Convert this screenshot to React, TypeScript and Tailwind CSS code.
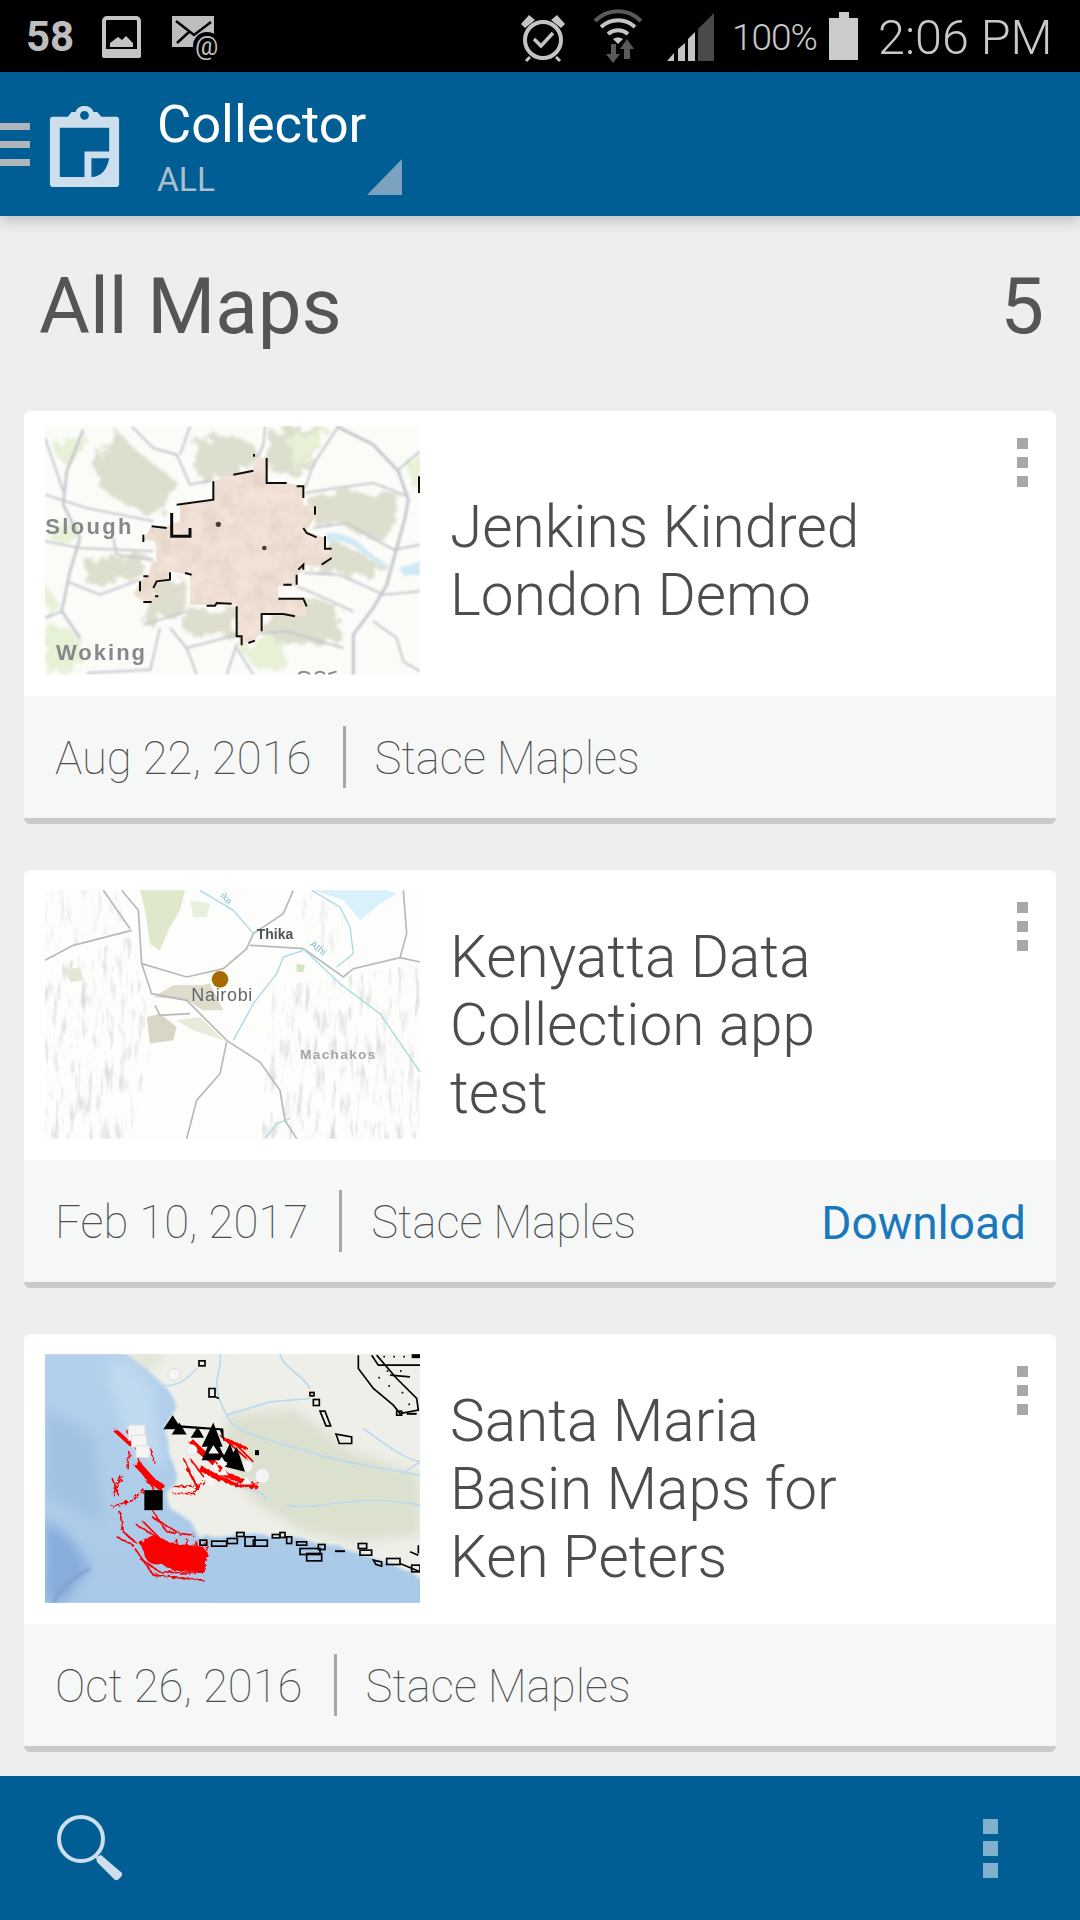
const cards = [
  { title: ["Jenkins Kindred", "London Demo"], date: "Aug 22, 2016", map: <LondonMap />, download: false, top: "h-[285px]" },
  { title: ["Kenyatta Data", "Collection app", "test"], date: "Feb 10, 2017", map: <NairobiMap />, download: true, top: "h-[290px]" },
  { title: ["Santa Maria", "Basin Maps for", "Ken Peters"], date: "Oct 26, 2016", map: <SantaMariaMap />, download: false, top: "h-[290px]" },
];

function LondonMap() {
  return (
    <svg viewBox="75 65 1125 745" className="w-full h-full block">
      <defs>
        <filter id="lb"><feGaussianBlur stdDeviation="2.500" /></filter>
        <filter id="lh" x="-10%" y="-10%" width="120%" height="120%">
          <feTurbulence type="fractalNoise" baseFrequency="0.025" numOctaves="3" seed="7" result="t" />
          <feDisplacementMap in="SourceGraphic" in2="t" scale="70" />
          <feGaussianBlur stdDeviation="4" />
        </filter>
        <filter id="ls"><feGaussianBlur stdDeviation="1.500" /></filter>
        <filter id="lm" x="0" y="0" width="100%" height="100%">
          <feTurbulence type="fractalNoise" baseFrequency="0.02" numOctaves="3" seed="4" />
          <feColorMatrix values="0 0 0 0 0.72  0 0 0 0 0.62  0 0 0 0 0.54  1.4 0 0 0 -0.5" />
          <feComposite in2="SourceAlpha" operator="in" result="n" />
          <feMerge>
            <feMergeNode in="SourceGraphic" />
            <feMergeNode in="n" />
          </feMerge>
        </filter>
      </defs>
      <rect x="75" y="65" width="1125" height="745" fill="#fbfbf8" />
      <g filter="url(#lh)" fill="#dddecd">
        <path d="M220 170 L290 75 L340 130 L470 230 L430 330 L330 310 L240 250Z" />
        <path d="M520 130 L590 90 L700 120 L690 195 L540 230Z" />
        <path d="M750 75 L920 70 L850 210 L745 200Z" />
        <path d="M860 270 L1140 260 L1130 340 L1090 420 L950 350 L890 370Z" />
        <path d="M930 410 L1090 470 L1060 520 L860 490Z" />
        <path d="M190 470 L390 450 L370 500 L290 540 L200 540Z" />
        <path d="M380 520 L490 520 L500 610 L370 660Z" />
        <path d="M510 620 L650 610 L640 690 L500 690Z" />
        <path d="M770 590 L950 590 L970 710 L760 720 L730 670Z" />
      </g>
      <g filter="url(#lh)" fill="#e6f1d6">
        <path d="M75 540 L120 600 L90 640 L75 640Z" />
        <path d="M75 660 L180 690 L190 780 L90 810 L75 810Z" />
        <path d="M800 110 L930 70 L880 150 L820 200Z" />
        <path d="M1160 160 L1200 150 L1200 240 L1170 240Z" />
        <path d="M660 720 L780 690 L800 790 L700 790Z" />
        <path d="M100 380 L180 350 L170 410 L90 410Z" />
        <path d="M110 120 L200 90 L180 170 L120 180Z" />
      </g>
      <g filter="url(#lb)" fill="none" stroke="#c4c7cc" strokeWidth="6">
        <path d="M950 65 L1060 120 L1135 200 L1165 285 L1155 340 L1100 540 L1060 610 L1000 690 L1000 810" strokeWidth="9" />
        <path d="M1200 140 L1130 200" />
        <path d="M955 65 L880 180 L855 250" />
        <path d="M855 265 L950 250 L1060 235 L1165 275" />
        <path d="M880 370 L980 355 L1120 435 L1200 420" />
        <path d="M850 505 L960 510 L1090 570 L1200 560" />
        <path d="M830 545 L890 570 L1000 620" />
        <path d="M1060 650 L1130 700 L1150 770 L1200 800" />
        <path d="M735 65 L730 120 L705 180" />
        <path d="M335 65 L400 130 L470 150 L510 240 L580 225" />
        <path d="M510 65 L480 150" />
        <path d="M190 75 L140 200 L130 300 L180 400 L150 500 L125 620 L180 700" strokeWidth="8" />
        <path d="M75 100 L130 260" />
        <path d="M75 270 L200 310 L400 350" />
        <path d="M75 410 L180 430 L400 440" />
        <path d="M280 400 L290 450 L400 465" />
        <path d="M140 530 L240 570 L360 525" />
        <path d="M75 640 L125 620" />
        <path d="M370 660 L500 620" />
        <path d="M420 670 L390 800" />
        <path d="M450 670 L500 730 L530 810" />
        <path d="M500 730 L650 690 L800 680 L970 730" />
        <path d="M650 720 L620 810 M650 730 L700 810" />
        <path d="M200 805 L390 795" />
      </g>
      <path
        filter="url(#lb)"
        fill="#cfeaf5"
        d="M920 385 C960 380 1010 400 1040 435 C1060 455 1090 475 1110 485 L1095 490 C1060 470 1030 450 1010 430 C990 415 960 410 920 410Z M1140 490 L1200 470 L1200 512 L1150 512Z"
      />
      <path
        filter="url(#lm)"
        fill="#f3e2d7"
        d="M705 160 L740 160 L740 235 L800 235 L850 245 L850 300 L885 305 L885 335 L860 380 L915 400 L915 430 L935 435 L935 460 L905 480 L850 480 L850 500 L830 510 L830 545 L775 545 L775 580 L850 585 L860 635 L725 630 L725 680 L700 710 L665 715 L650 690 L650 600 L510 600 L510 510 L450 500 L450 520 L400 550 L410 580 L370 590 L340 570 L360 530 L385 510 L395 475 L410 470 L405 410 L370 405 L395 365 L440 365 L480 350 L480 300 L575 285 L580 230 L640 210 L700 195Z"
      />
      <g filter="url(#ls)" fill="none" stroke="#111" strokeWidth="6">
        <path d="M740 160 L740 235 L800 235" />
        <path d="M830 245 L850 245 L850 280" />
        <path d="M580 230 L580 285 L470 300" />
        <path d="M640 210 L700 198" />
        <path d="M455 325 L455 395 L510 395 L510 370" strokeWidth="9" />
        <path d="M395 365 L440 370" />
        <path d="M370 390 L370 412" />
        <path d="M850 370 L860 385 L890 398" />
        <path d="M915 395 L915 432 L935 432" />
        <path d="M905 480 L935 460" />
        <path d="M830 510 L830 540 M790 540 L815 540" />
        <path d="M775 582 L850 582 L860 605" />
        <path d="M725 680 L725 628 L790 628 L825 635" />
        <path d="M650 605 L650 695 L665 695 L665 722 M685 715 L705 708" />
        <path d="M560 603 L585 603 L590 595 L635 597" />
        <path d="M450 503 L450 525 L410 530 L400 550" />
        <path d="M385 515 L370 515 M360 530 L360 560 M370 592 L395 592 M405 575 L415 575" />
        <path d="M495 505 L515 510 M885 305 L885 330 M835 495 L850 480 L850 495" />
        <path d="M702 148 L702 156 M1197 215 L1197 265" />
      </g>
      <circle cx="595" cy="359" r="8" fill="#4a3b36" filter="url(#ls)" />
      <circle cx="733" cy="430" r="7" fill="#4a3b36" filter="url(#ls)" />
      <path d="M835 808 Q850 795 870 808 M885 808 Q900 795 915 808 M925 808 L950 800" fill="none" stroke="#8a8a8a" strokeWidth="6" filter="url(#ls)" />
      <g filter="url(#ls)" fontFamily="'Liberation Sans', sans-serif" fontWeight="bold" fill="#86898a">
        <text x="76" y="388" fontSize="66" letterSpacing="7">Slough</text>
        <text x="108" y="765" fontSize="66" letterSpacing="6">Woking</text>
      </g>
    </svg>
  );
}

function NairobiMap() {
  return (
    <svg viewBox="75 60 1125 745" className="w-full h-full block">
      <defs>
        <filter id="nb"><feGaussianBlur stdDeviation="2" /></filter>
        <filter id="ns"><feGaussianBlur stdDeviation="1" /></filter>
        <filter id="nh" x="0" y="0" width="100%" height="100%">
          <feTurbulence type="fractalNoise" baseFrequency="0.06 0.012" numOctaves="4" seed="11" />
          <feColorMatrix values="0 0 0 0 0.66  0 0 0 0 0.66  0 0 0 0 0.63  2.2 0 0 0 -1.12" />
          <feComposite in2="SourceAlpha" operator="in" />
          <feGaussianBlur stdDeviation="1.500" />
        </filter>
      </defs>
      <rect x="75" y="60" width="1125" height="745" fill="#fdfdfc" />
      <path d="M75 300 L330 200 L400 500 L330 805 L75 805Z" fill="#000" filter="url(#nh)" />
      <path d="M760 350 L1200 280 L1200 805 L720 805Z" fill="#000" filter="url(#nh)" />
      <path d="M75 60 L340 60 L330 170 L75 250Z" fill="#000" filter="url(#nh)" opacity="0.6" />
      <path d="M830 60 L960 100 L990 280 L860 220Z" fill="#000" filter="url(#nh)" opacity="0.6" />
      <g filter="url(#nb)">
        <path d="M970 90 L1020 150 L1080 100 L1130 70 L1100 60 L880 60Z" fill="#d8f1fb" />
        <path d="M360 60 L495 60 L480 120 L450 170 L420 240 L390 220 L375 120Z" fill="#dde9ca" />
        <path d="M510 90 L570 100 L560 140 L520 140Z" fill="#e7f0db" />
        <path d="M830 280 L855 285 L850 305 L830 305Z" fill="#d3e3bc" />
        <path d="M140 300 L180 290 L190 330 L150 335Z" fill="#e2e8d5" />
        <path d="M460 345 L540 345 L570 340 L610 420 L550 420 L500 390 L400 380Z" fill="#dfdccc" />
        <path d="M380 440 L420 430 L470 470 L460 510 L390 520Z" fill="#dad6c7" />
        <path d="M470 450 L540 440 L610 510 L520 480Z" fill="#e6ebdc" />
        <g fill="none" stroke="#b9b9b9" strokeWidth="5">
          <path d="M305 60 L355 120 L365 280 L395 370 L500 390 L620 510 L720 575 L780 660 L795 750 L830 805" />
          <path d="M250 60 L330 175" />
          <path d="M75 270 L160 225 L335 180" />
          <path d="M365 280 L500 320 L610 295 L680 235 L700 190 L790 130 L820 60" />
          <path d="M690 225 L850 235 L970 320 L1000 295 L1140 262 L1200 275" />
          <path d="M1140 262 L1160 190 L1150 60" />
          <path d="M620 515 L600 610 L530 690 L500 805" />
          <path d="M405 405 L420 435 L510 430" />
        </g>
        <g fill="none" stroke="#a9dbe6" strokeWidth="4">
          <path d="M540 60 L640 120 L700 190" />
          <path d="M850 235 L960 340 L1080 430 L1200 605" />
          <path d="M850 240 L790 260 L770 310 L700 400 L640 510" />
          <path d="M735 805 L770 760 L810 745" />
          <path d="M875 60 L960 110 L990 170 L1000 250 L950 290" />
        </g>
      </g>
      <circle cx="600" cy="327" r="25" fill="#a86a00" />
      <g filter="url(#ns)" fontFamily="'Liberation Sans', sans-serif">
        <text x="514" y="392" fontSize="54" fill="#62676a" letterSpacing="2">Nairobi</text>
        <text x="710" y="205" fontSize="42" fontWeight="bold" fill="#4f5355">Thika</text>
        <text x="840" y="565" fontSize="41" fontWeight="bold" fill="#a5a5a5" letterSpacing="4">Machakos</text>
        <text x="868" y="225" fontSize="30" fill="#7fbcd0" transform="rotate(38 868 225)">Athi</text>
        <text x="600" y="78" fontSize="28" fill="#7fbcd0" transform="rotate(45 600 78)">ika</text>
      </g>
    </svg>
  );
}

function SantaMariaMap() {
  return (
    <svg viewBox="75 57 1125 746" className="w-full h-full block">
      <defs>
        <linearGradient id="sea" x1="0" y1="0" x2="0" y2="1">
          <stop offset="0" stopColor="#b3d1ec" />
          <stop offset="1" stopColor="#a9c9e8" />
        </linearGradient>
        <filter id="sb"><feGaussianBlur stdDeviation="2" /></filter>
        <filter id="sh"><feGaussianBlur stdDeviation="18" /></filter>
        <filter id="sl"><feGaussianBlur stdDeviation="5" /></filter>
        <filter id="sc" x="-10%" y="-10%" width="120%" height="120%">
          <feTurbulence type="fractalNoise" baseFrequency="0.015" numOctaves="3" seed="3" result="t" />
          <feDisplacementMap in="SourceGraphic" in2="t" scale="30" />
          <feGaussianBlur stdDeviation="5" />
        </filter>
        <filter id="sr" x="-10%" y="-10%" width="120%" height="120%">
          <feTurbulence type="fractalNoise" baseFrequency="0.09" numOctaves="2" seed="9" result="t" />
          <feDisplacementMap in="SourceGraphic" in2="t" scale="16" />
          <feGaussianBlur stdDeviation="1.200" />
        </filter>
      </defs>
      <rect x="75" y="57" width="1125" height="746" fill="url(#sea)" />
      <g filter="url(#sh)">
        <path d="M75 550 L160 620 L210 700 L130 803 L75 803Z" fill="#86addb" />
        <path d="M75 220 L220 300 L250 560 L75 480Z" fill="#a2c2e3" />
        <path d="M280 57 L400 150 L430 400 L320 330 L260 120Z" fill="#bfd9ef" />
        <path d="M560 670 L1100 680 L1200 803 L540 803Z" fill="#a8c9e8" />
      </g>
      <path d="M210 700 C170 720 120 760 100 803" fill="none" stroke="#7d9fcb" strokeWidth="8" filter="url(#sl)" />
      <path
        filter="url(#sc)"
        fill="#eeefe8"
        d="M310 50 L370 90 L450 170 L470 210 L430 270 L440 310 L470 420 L445 470 L450 520 L510 555 L540 610 L700 595 L850 610 L1000 650 L1120 690 L1215 735 L1215 40Z"
      />
      <path filter="url(#sh)" fill="#dbe0cf" d="M620 240 L820 220 L980 340 L1200 420 L1200 600 L1000 620 L850 590 L700 500 L620 380Z" />
      <path filter="url(#sh)" fill="#dbe0cf" d="M310 57 L430 57 L400 100Z" />
      <g filter="url(#sb)" fill="none" stroke="#bcd9ee" strokeWidth="5">
        <path d="M420 150 C480 160 510 120 530 100 M600 57 C610 120 560 130 620 240 C640 300 780 320 900 360 C1000 390 1100 400 1200 420" />
        <path d="M780 57 C790 100 840 110 870 160 M620 240 L750 200 L870 190" />
        <path d="M800 510 C900 530 1000 470 1200 510 M1030 280 C1100 330 1150 370 1200 380" />
        <path d="M640 450 C700 470 730 460 740 500 M1140 420 L1200 380" />
      </g>
      <g filter="url(#sr)" fill="none" stroke="#fa0000" strokeWidth="5">
        <path d="M320 285 L350 340 L360 400 L400 460 L400 530 L440 590 L520 600" />
        <path d="M360 380 L380 420 L430 450" />
        <path d="M330 350 L320 400 M390 340 L405 385" />
        <path d="M275 425 L295 480 M300 420 L280 480 M310 425 L290 450" />
        <path d="M275 515 L340 495 L370 460" />
        <path d="M300 530 L310 590 L350 625" />
        <path d="M290 605 L340 630 M320 600 L340 615" />
        <path d="M350 570 L420 610 M370 560 L430 620 M395 545 L470 590" />
        <path d="M345 640 L400 720 L550 735" />
        <path d="M360 670 L420 710 L530 715" />
        <path d="M460 475 L520 475 L560 430" />
        <path d="M490 370 L530 450 M510 370 L555 430 M500 400 L535 460" />
        <path d="M460 455 L540 450" />
        <path d="M560 660 L560 620 M550 625 L560 620" />
        <path d="M520 340 L600 400 M560 320 L660 400 M600 300 L680 370 M640 320 L700 380" />
        <path d="M600 420 L660 455 L720 440" />
        <path d="M470 610 L470 680 M500 610 L500 690 M530 620 L530 700" />
      </g>
      <g filter="url(#sr)" fill="none" stroke="#fa0000">
        <path d="M285 285 L335 330" strokeWidth="12" />
        <path d="M350 385 L400 440" strokeWidth="20" />
        <path d="M380 430 L430 460" strokeWidth="20" />
        <path d="M510 315 L620 420 L700 450" strokeWidth="16" />
        <path d="M610 310 L680 340" strokeWidth="10" />
        <path d="M540 400 L600 430" strokeWidth="16" />
        <path d="M600 430 L650 450 L715 455" strokeWidth="10" />
      </g>
      <path filter="url(#sr)" fill="#fa0000" d="M355 620 L400 600 L460 625 L550 635 L565 660 L550 715 L460 705 L380 665Z" />
      <circle cx="410" cy="650" r="38" fill="#fa0000" filter="url(#sb)" />
      <rect x="373" y="465" width="55" height="60" fill="#000" filter="url(#sb)" />
      <g fill="#f5f5f5" stroke="#ddd" strokeWidth="3" filter="url(#sb)">
        <rect x="325" y="270" width="50" height="45" />
        <rect x="335" y="300" width="45" height="35" />
        <rect x="348" y="332" width="40" height="35" />
        <circle cx="462" cy="118" r="18" />
        <circle cx="515" cy="345" r="16" />
        <circle cx="680" cy="393" r="18" />
        <circle cx="727" cy="422" r="22" />
      </g>
      <g fill="#000" filter="url(#sb)">
        <path d="M430 282 L458 240 L485 282Z" />
        <path d="M455 298 L478 262 L500 298Z" />
        <path d="M512 308 L533 275 L552 308Z" />
        <path d="M545 335 L580 262 L608 335Z" />
        <path d="M545 375 L580 295 L618 375Z" />
        <path d="M605 375 L630 325 L655 395Z" />
        <path d="M615 395 L650 335 L675 410Z" />
        <path d="M480 270 L610 280 L612 320 L600 285 L480 278Z" />
      </g>
      <g fill="#f5f5f5" filter="url(#sb)">
        <path d="M565 355 L580 330 L597 355Z" />
        <path d="M570 405 L585 380 L600 405Z" />
        <path d="M590 390 L605 365 L622 390Z" />
        <path d="M595 420 L610 395 L625 420Z" />
        <path d="M545 435 L560 415 L575 440Z" />
        <path d="M555 450 L570 420 L588 450Z" />
        <path d="M662 448 L680 425 L697 448Z" />
      </g>
      <g fill="none" stroke="#000" strokeWidth="5" filter="url(#sb)">
        <rect x="537" y="77" width="18" height="15" />
        <path d="M567 160 L585 160 L585 185 L567 185Z M585 185 L597 190" />
        <rect x="870" y="172" width="12" height="10" />
        <rect x="880" y="193" width="18" height="18" />
        <path d="M900 228 L915 228 L932 272 L918 272Z" />
        <path d="M948 297 L995 305 L995 325 L958 325Z" />
        <path d="M1015 60 L1015 100 L1060 160 L1120 210 L1140 235 L1195 225 L1190 190 L1130 130 L1070 60" />
        <path d="M1055 60 L1075 90 L1200 90 M1110 120 L1170 125" />
        <rect x="1130" y="228" width="15" height="12" />
        <rect x="540" y="615" width="20" height="15" />
        <rect x="575" y="618" width="45" height="15" />
        <rect x="622" y="610" width="30" height="15" />
        <rect x="650" y="592" width="22" height="12" />
        <rect x="675" y="605" width="30" height="28" />
        <rect x="700" y="615" width="42" height="18" />
        <rect x="757" y="598" width="22" height="10" />
        <rect x="780" y="592" width="15" height="15" />
        <rect x="800" y="605" width="15" height="20" />
        <rect x="830" y="620" width="30" height="10" />
        <rect x="840" y="640" width="60" height="18" />
        <rect x="860" y="655" width="45" height="22" />
        <rect x="895" y="628" width="20" height="15" />
        <rect x="1015" y="625" width="25" height="15" />
        <rect x="1020" y="645" width="35" height="15" />
        <path d="M1060 675 L1085 680 L1085 693 L1068 688Z" />
        <rect x="1100" y="670" width="40" height="18" />
        <path d="M1140 685 L1200 710" />
        <rect x="1175" y="690" width="25" height="20" />
        <path d="M1195 630 L1195 655 M1170 650 L1195 660" />
      </g>
      <g fill="#000" filter="url(#sb)">
        <rect x="945" y="645" width="30" height="6" />
        <rect x="1175" y="57" width="25" height="12" />
        <rect x="705" y="345" width="12" height="15" />
        <rect x="1160" y="233" width="30" height="6" />
        <rect x="1090" y="62" width="5" height="5" />
        <rect x="1120" y="62" width="5" height="5" />
        <rect x="1150" y="62" width="5" height="5" />
        <rect x="1075" y="125" width="5" height="5" />
        <rect x="1100" y="105" width="5" height="5" />
        <rect x="1140" y="105" width="5" height="5" />
        <rect x="1105" y="150" width="5" height="5" />
        <rect x="1145" y="170" width="5" height="5" />
        <rect x="1165" y="205" width="5" height="5" />
      </g>
    </svg>
  );
}

function StatusIcons() {
  return (
    <svg viewBox="0 0 1080 72" className="w-full h-full block">
      <rect x="104" y="18" width="35" height="38" rx="3" fill="none" stroke="#c4c4c4" strokeWidth="4" />
      <rect x="102" y="49" width="39" height="9" rx="2" fill="#c4c4c4" />
      <path d="M110 47 L110 43 L118 37 L122 40 L126 36 L133 43 L133 47Z" fill="#c4c4c4" />

      <path d="M172 16 L214 16 L214 47 L172 47Z" fill="#bdbdbd" />
      <path d="M176 21 L194 35 L211 22 M177 43 L189 32" stroke="#000" strokeWidth="2.5" fill="none" />
      <circle cx="207" cy="46" r="14" fill="#000" />
      <text x="195" y="55" fontSize="26" fontFamily="Roboto, sans-serif" fill="#bdbdbd">@</text>

      <circle cx="543" cy="40" r="18" fill="none" stroke="#c4c4c4" strokeWidth="4" />
      <path d="M534 39 L541 46 L553 33" fill="none" stroke="#c4c4c4" strokeWidth="3.500" />
      <path d="M521 24 L529 15 L535 20 L525 28Z M565 24 L557 15 L551 20 L561 28Z" fill="#c4c4c4" />
      <path d="M530 57 L526 61 M556 57 L560 61" stroke="#c4c4c4" strokeWidth="3" />

      <path d="M595 21 C608 8 628 8 641 21" fill="none" stroke="#5a5a5a" strokeWidth="4" />
      <path d="M601 27 C611 18 625 18 635 27" fill="none" stroke="#c4c4c4" strokeWidth="4" />
      <path d="M608 34 C614 29 622 29 628 34" fill="none" stroke="#c4c4c4" strokeWidth="4" />
      <path d="M613 39 C616 37 620 37 623 39 L618 44Z" fill="#c4c4c4" />
      <path d="M611 44 L616 44 L616 54 L620 54 L613 63 L606 54 L611 54Z" fill="#5a5a5a" />
      <path d="M624 59 L630 59 L630 49 L634 49 L627 39 L620 49 L624 49Z" fill="#5a5a5a" />

      <path d="M667 61 L674 53 L674 61Z" fill="#c4c4c4" />
      <path d="M678 61 L678 49 L685 43 L685 61Z" fill="#c4c4c4" />
      <path d="M688 61 L688 39 L695 32 L695 61Z" fill="#c4c4c4" />
      <path d="M698 61 L698 29 L714 13 L714 61Z" fill="#4a4a4a" />

      <rect x="829" y="18" width="29" height="42" fill="#cccccc" />
      <rect x="839" y="12" width="10" height="7" fill="#cccccc" />
    </svg>
  );
}

function Dots() {
  return (
    <div className="flex flex-col gap-2">
      <div className="w-[11px] h-[11px] bg-[#a6a9ab]" />
      <div className="w-[11px] h-[11px] bg-[#a6a9ab]" />
      <div className="w-[11px] h-[11px] bg-[#a6a9ab]" />
    </div>
  );
}

export default function App() {
  return (
    <div className="w-[1080px] h-[1920px] flex flex-col bg-[#eeeeee] overflow-hidden font-['Roboto',sans-serif]">
      {/* status bar */}
      <div className="relative h-[72px] bg-black shrink-0">
        <StatusIcons />
        <span className="absolute left-[26px] top-[14px] text-[42px] leading-[46px] font-bold text-[#bdbdbd]">58</span>
        <span className="absolute left-[732px] top-[18px] text-[37px] leading-[40px] font-light text-[#c8c8c8] tracking-[-1px]">100%</span>
        <span className="absolute left-[878px] top-[10px] text-[48.500px] leading-[56px] font-light text-[#c8c8c8]">2:06 PM</span>
      </div>

      {/* app bar */}
      <div className="relative z-10 h-[144px] bg-[#005e95] shrink-0 flex items-center shadow-[0_4px_14px_rgba(0,0,0,0.22)]">
        <div className="w-[30px] flex flex-col gap-[11px]">
          <div className="h-[7px] bg-[#b0b5b9]" />
          <div className="h-[7px] bg-[#b0b5b9]" />
          <div className="h-[7px] bg-[#b0b5b9]" />
        </div>
        <svg viewBox="0 0 70 86" className="w-[71px] h-[85px] ml-[19px] mt-[1px]">
          <path
            fillRule="evenodd"
            fill="#cddfec"
            d="M3 15 L18 15 L22 10 L26 10 C28 2 42 2 44 10 L48 10 L52 15 L67 15 C69 15 70 16 70 18 L70 83 C70 85 69 86 67 86 L3 86 C1 86 0 85 0 83 L0 18 C0 16 1 15 3 15Z M35 9 A4.500 4.500 0 1 0 35 18 A4.500 4.500 0 1 0 35 9Z M10 26 L10 76 L35 76 L35 50 L60 50 L60 26Z M42 57 L42 76 C52 76 58 68 60 57Z"
          />
        </svg>
        <div className="ml-[37px] flex flex-col mt-[6px]">
          <span className="text-[52.500px] leading-[58px] text-white">Collector</span>
          <span className="text-[33.500px] leading-[38px] mt-[8px] text-[#adbfcc]">ALL</span>
        </div>
        <div className="absolute left-[367px] top-[87px] w-[35px] h-[36px] bg-[#7ba3bf] [clip-path:polygon(100%_0,100%_100%,0_100%)]" />
      </div>

      {/* heading */}
      <div className="h-[195px] shrink-0 flex items-center justify-between pl-[39px] pr-[36px] pb-[14px] text-[#555555] text-[78px]">
        <span>All Maps</span>
        <span>5</span>
      </div>

      {/* map cards */}
      <div className="flex-1 flex flex-col gap-[46px] px-[24px]">
        {cards.map((card) => (
          <div key={card.date} className="rounded-[6px] overflow-hidden border-b-[6px] border-[#cacaca] bg-white">
            <div className={`${card.top} flex items-end relative pl-[21px] pb-[21px]`}>
              <div className="w-[375px] h-[249px] shrink-0 overflow-hidden">{card.map}</div>
              <div className="h-[249px] ml-[30px] pt-[20px] flex flex-col justify-center text-[58.500px] leading-[68px] font-light text-[#4d4d4d]">
                {card.title.map((line) => (
                  <div key={line}>{line}</div>
                ))}
              </div>
              <div className="absolute right-[28px] bottom-[209px]">
                <Dots />
              </div>
            </div>
            <div className="h-[122px] bg-[#f6f8f7] flex items-center pl-[31px] pr-[30px] text-[45.500px] font-thin text-[#4d4d4d]">
              <span className="pt-[4px]">{card.date}</span>
              <div className="w-[3px] h-[62px] bg-[#a6a9ab] ml-[31px] mr-[29px]" />
              <span className="pt-[4px]">Stace Maples</span>
              {card.download && <span className="ml-auto pt-[4px] text-[46px] font-normal text-[#1a78bd]">Download</span>}
            </div>
          </div>
        ))}
      </div>

      {/* bottom bar */}
      <div className="h-[144px] bg-[#005e95] shrink-0 flex items-center justify-between pl-[57px] pr-[82px]">
        <svg viewBox="0 0 66 66" className="w-[66px] h-[66px]">
          <circle cx="24" cy="24" r="22" fill="none" stroke="#cddfec" strokeWidth="4" />
          <path d="M39 42 L44 40 L65 58 C66 61 61 66 58 65 L40 47Z" fill="#cddfec" />
        </svg>
        <div className="flex flex-col gap-[7px]">
          <div className="w-[15px] h-[15px] bg-[#7fb0cd]" />
          <div className="w-[15px] h-[15px] bg-[#7fb0cd]" />
          <div className="w-[15px] h-[15px] bg-[#7fb0cd]" />
        </div>
      </div>
    </div>
  );
}
